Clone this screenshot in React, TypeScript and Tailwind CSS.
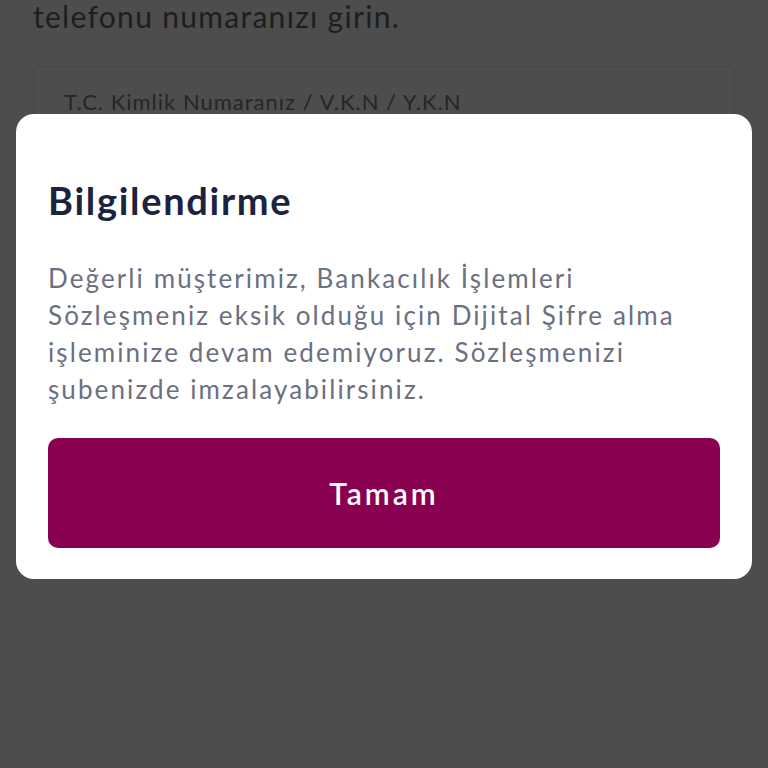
import React from "react";

export default function App() {
  const font = { fontFamily: "Lato, 'Noto Sans', sans-serif" };
  return (
    <div
      className="relative w-[768px] h-[768px] overflow-hidden bg-[#4d4d4d]"
      style={font}
    >
      <div className="px-[33px]">
        <p className="mt-[-4px] text-[30px] leading-[40px] tracking-[1.3px] text-[#1e1e1e] whitespace-nowrap">
          telefonu numaranızı girin.
        </p>
        <div className="mt-[30px] h-[90px] rounded-[6px] border border-[#464646] pl-[30px] pt-[18px]">
          <span className="text-[22px] tracking-[1px] text-[#262626] whitespace-nowrap">
            T.C. Kimlik Numaranız / V.K.N / Y.K.N
          </span>
        </div>
      </div>
      <div className="absolute left-[16px] top-[114px] w-[736px] h-[465px] rounded-[18px] bg-white px-[32px] pt-[62px]">
        <h2 className="text-[38px] leading-[48px] font-bold tracking-[1.7px] text-[#1c2340] whitespace-nowrap">
          Bilgilendirme
        </h2>
        <p className="mt-[36px] text-[26px] leading-[37px] tracking-[2.1px] text-[#6b6f80]">
          <span className="block whitespace-nowrap">Değerli müşterimiz, Bankacılık İşlemleri</span>
          <span className="block whitespace-nowrap">Sözleşmeniz eksik olduğu için Dijital Şifre alma</span>
          <span className="block whitespace-nowrap">işleminize devam edemiyoruz. Sözleşmenizi</span>
          <span className="block whitespace-nowrap">şubenizde imzalayabilirsiniz.</span>
        </p>
        <button className="mt-[30px] flex h-[110px] w-full items-center justify-center rounded-[10px] bg-[#8a0050] text-[30px] font-semibold tracking-[3px] text-white">
          Tamam
        </button>
      </div>
    </div>
  );
}
